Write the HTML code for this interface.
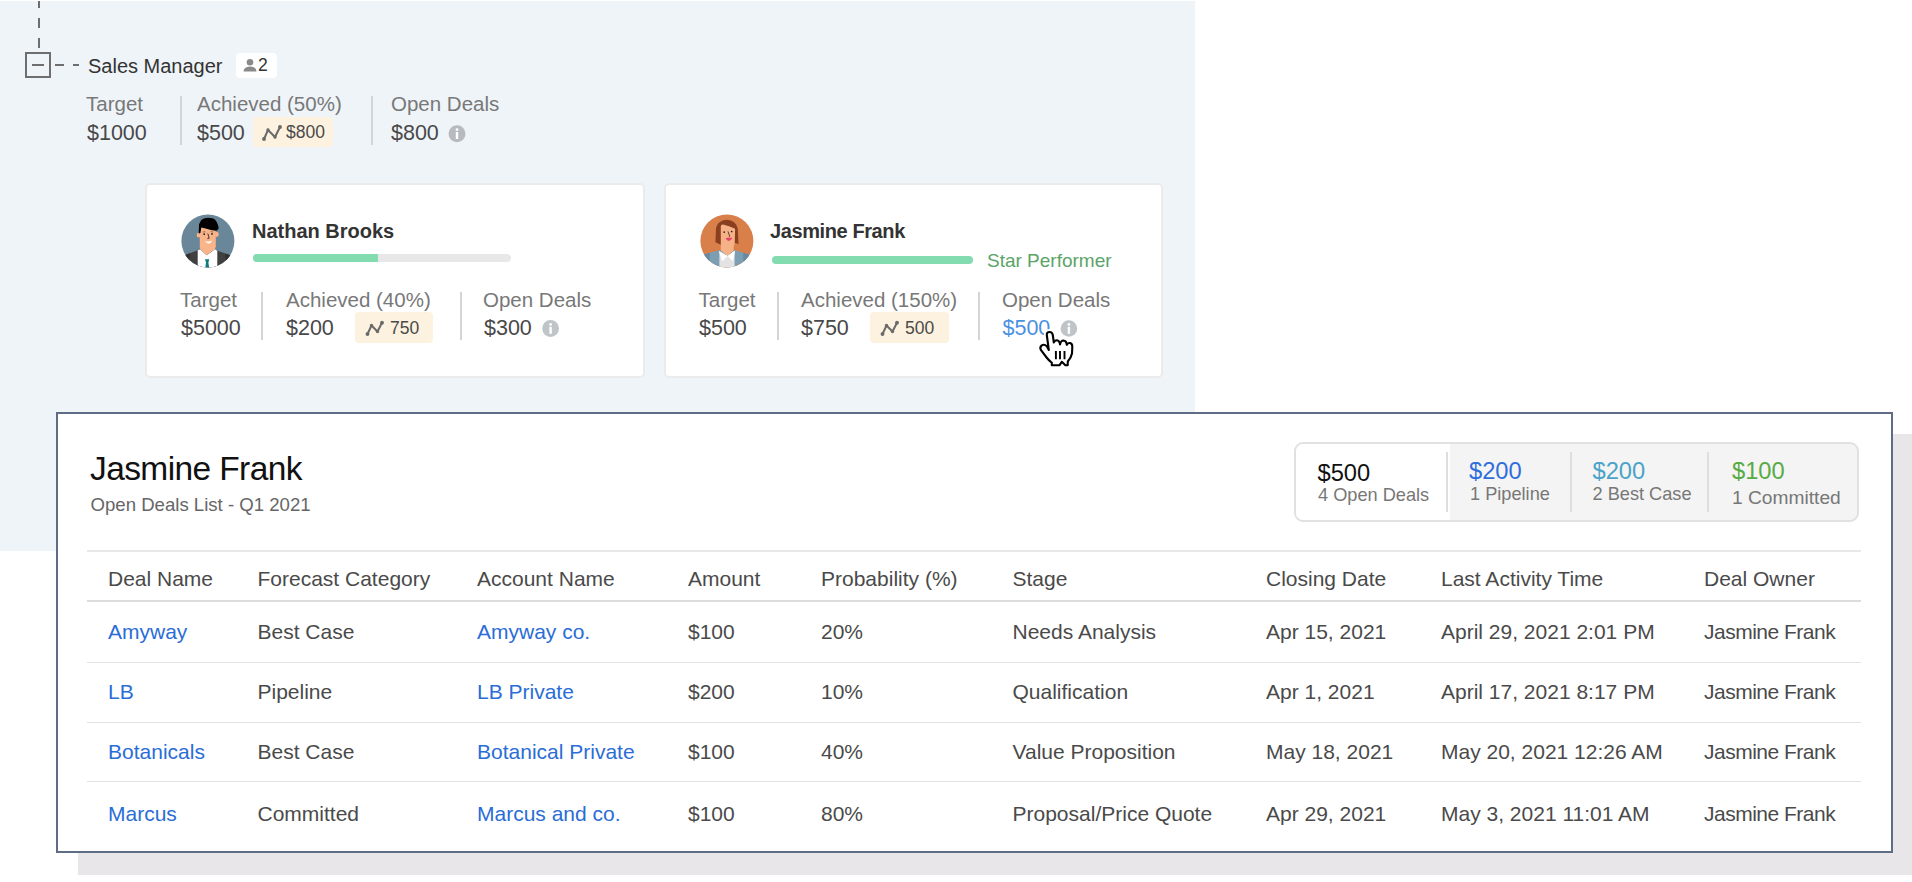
<!DOCTYPE html>
<html><head><meta charset="utf-8">
<style>
html,body{margin:0;padding:0;width:1912px;height:882px;overflow:hidden;background:#fff;font-family:"Liberation Sans",sans-serif}
.a{position:absolute}
.t{position:absolute;white-space:nowrap;line-height:1}
.bg{left:0;top:1px;width:1195px;height:550px;background:#eff4f8}
.lbl{color:#787878;font-size:20.5px}
.val{color:#484848;font-size:21.5px}
.div{background:#d5d5d5;width:2px}
.badge{background:#fdf2df;border-radius:4px}
.bnum{color:#4a4a4a;font-size:17.5px}
.card{background:#fff;border:2px solid #ebebeb;border-radius:5px;box-sizing:border-box}
.name{color:#333;font-weight:bold;font-size:20px}
.th{color:#4a4a4a;font-size:21px}
.td{color:#4a4a4a;font-size:21px}
.lk{color:#2a6dd6;font-size:21px}
.hl{background:#e2e2e2;height:1px;left:87px;width:1774px}
</style></head><body>
<div class="a bg"></div>
<!-- tree lines -->
<div class="a" style="left:38px;top:1px;width:2px;height:47.2px;overflow:hidden"><div style="margin-top:-4.3px;height:60px;background:repeating-linear-gradient(to bottom,#6e6e6e 0 10.5px,transparent 10.5px 20.5px)"></div></div>
<div class="a" style="left:25px;top:52px;width:26px;height:26px;border:2px solid #6e6e6e;box-sizing:border-box"></div>
<div class="a" style="left:32px;top:64px;width:12px;height:2px;background:#6e6e6e"></div>
<div class="a" style="left:55px;top:64px;width:9px;height:2px;background:#6e6e6e"></div>
<div class="a" style="left:73px;top:64px;width:6px;height:2px;background:#6e6e6e"></div>
<div class="t" style="left:88px;top:56px;font-size:20px;color:#333">Sales Manager</div>
<div class="a" style="left:236px;top:53px;width:41px;height:25px;background:#fff;border-radius:4px"></div>
<svg class="a" style="left:243px;top:58px" width="14" height="14" viewBox="0 0 14 14"><circle cx="7" cy="4.2" r="3.3" fill="#8a8a8a"/><path d="M0.5 13.5 Q0.6 8.6 7 8.4 Q13.4 8.6 13.5 13.5 Z" fill="#8a8a8a"/></svg>
<div class="t" style="left:258px;top:57.3px;font-size:17.5px;color:#333">2</div>

<!-- manager stats -->
<div class="t lbl" style="left:86px;top:94px">Target</div>
<div class="t val" style="left:87px;top:123px">$1000</div>
<div class="a div" style="left:180px;top:96px;height:49px"></div>
<div class="t lbl" style="left:197px;top:94px">Achieved (50%)</div>
<div class="t val" style="left:197px;top:123px">$500</div>
<div class="a badge" style="left:253px;top:117px;width:80px;height:30px"></div>
<svg class="a" style="left:261px;top:124px" width="22" height="18" viewBox="0 0 22 18"><polyline points="3,15 7,6 14,13 19,3" fill="none" stroke="#6a6a6a" stroke-width="2"/><circle cx="3" cy="15" r="1.95" fill="#6a6a6a"/><circle cx="7" cy="6" r="1.7" fill="#6a6a6a"/><circle cx="14" cy="13" r="1.7" fill="#6a6a6a"/><circle cx="19" cy="3" r="1.95" fill="#6a6a6a"/></svg>
<div class="t bnum" style="left:286px;top:123.5px">$800</div>
<div class="a div" style="left:371px;top:96px;height:49px"></div>
<div class="t lbl" style="left:391px;top:94px">Open Deals</div>
<div class="t val" style="left:391px;top:123px">$800</div>
<svg class="a" style="left:448px;top:125px" width="18" height="18" viewBox="0 0 18 18"><circle cx="9" cy="8.8" r="8.5" fill="#b7bbbf"/><circle cx="9" cy="4.6" r="1.4" fill="#fff"/><rect x="7.8" y="7" width="2.4" height="7" fill="#fff"/></svg>

<!-- Nathan card -->
<div class="a card" style="left:145px;top:183px;width:499.5px;height:195px"></div>
<svg class="a" style="left:178px;top:211px" width="60" height="60" viewBox="0 0 60 60">
<defs><clipPath id="c1"><circle cx="29.9" cy="29.9" r="26.5"/></clipPath></defs>
<circle cx="29.9" cy="29.9" r="26.5" fill="#6a8799"/>
<g clip-path="url(#c1)">
<path d="M2 60 L6 44.5 L19.7 39.3 L39.5 39.8 L53 44.5 L58 60Z" fill="#404040"/>
<path d="M2 60 L6 44.5 L12 42.3 L10 60Z M58 60 L53 44.5 L47 42.5 L49 60Z" fill="#303030"/>
<path d="M19.7 39.3 L22.4 38.6 L28.6 44.2 L37 38.2 L39.3 40 L39.3 60 L19.7 60Z" fill="#fff"/>
<path d="M21.8 16 L37.8 16 L37.8 35.5 Q37 38 36.7 38.2 L28.6 44.2 L22.4 38.6 Q21.8 37 21.8 35.5Z" fill="#f9b48a"/>
<ellipse cx="20.6" cy="24" rx="1.9" ry="2.6" fill="#f9b48a"/><ellipse cx="38.8" cy="23.3" rx="1.9" ry="2.6" fill="#f9b48a"/>
<path d="M20.7 22.6 L21 13.6 Q22.5 8.5 26 7.4 Q30 6.3 35.4 7.5 Q39 9 40.8 17 Q39.5 19.8 38 19.8 Q33 19.5 27.5 17.6 L23.3 16.4 L22.4 22Z" fill="#000"/>
<path d="M26.9 30 Q30.6 31.5 34.2 29.6 Q33 32.6 30.6 32.4 Q28 32.3 26.9 30Z" fill="#fff"/>
<circle cx="26.2" cy="23.2" r="0.85" fill="#1a1a1a"/><circle cx="34" cy="22.9" r="0.85" fill="#1a1a1a"/>
<path d="M24.8 21 L27.4 20.8 M32.6 20.7 L35.2 21" stroke="#5a3a2a" stroke-width="0.6"/>
<path d="M29.8 22.5 L31.2 27.2 L29.4 27.6" fill="none" stroke="#1a1a1a" stroke-width="0.8"/>
<path d="M27 48.3 L31.3 48.3 L30.4 51.5 L31.2 57 L27.3 57 L28 51.5Z" fill="#0e7a7b"/>
</g></svg>
<div class="t name" style="left:252px;top:221px">Nathan Brooks</div>
<div class="a" style="left:253px;top:253.5px;width:258px;height:8px;border-radius:4px;background:#e8e8e8;overflow:hidden"><div style="width:125px;height:8px;background:#82dcb0"></div></div>
<div class="t lbl" style="left:180px;top:290px">Target</div>
<div class="t val" style="left:181px;top:318px">$5000</div>
<div class="a div" style="left:260.5px;top:292px;height:48px"></div>
<div class="t lbl" style="left:286px;top:290px">Achieved (40%)</div>
<div class="t val" style="left:286px;top:318px">$200</div>
<div class="a badge" style="left:355px;top:312px;width:78px;height:31px"></div>
<svg class="a" style="left:364px;top:320px" width="22" height="18" viewBox="0 0 22 18"><polyline points="3.5,14 7.5,5.5 13.5,11.5 18,2.7" fill="none" stroke="#6a6a6a" stroke-width="2"/><circle cx="3.5" cy="14" r="1.95" fill="#6a6a6a"/><circle cx="7.5" cy="5.5" r="1.7" fill="#6a6a6a"/><circle cx="13.5" cy="11.5" r="1.7" fill="#6a6a6a"/><circle cx="18" cy="2.7" r="1.95" fill="#6a6a6a"/></svg>
<div class="t bnum" style="left:390px;top:320px">750</div>
<div class="a div" style="left:460px;top:292px;height:48px"></div>
<div class="t lbl" style="left:483px;top:290px">Open Deals</div>
<div class="t val" style="left:484px;top:318px">$300</div>
<svg class="a" style="left:542px;top:320px" width="18" height="18" viewBox="0 0 18 18"><circle cx="8.6" cy="8.5" r="8.4" fill="#bfc4c8"/><circle cx="8.6" cy="4.4" r="1.4" fill="#fff"/><rect x="7.4" y="6.8" width="2.4" height="7" fill="#fff"/></svg>

<!-- Jasmine card -->
<div class="a card" style="left:663.5px;top:183px;width:499.5px;height:195px"></div>
<svg class="a" style="left:697px;top:211px" width="60" height="60" viewBox="0 0 60 60">
<defs><clipPath id="c2"><circle cx="29.9" cy="29.9" r="26.5"/></clipPath></defs>
<circle cx="29.9" cy="29.9" r="26.5" fill="#d9804a"/>
<g clip-path="url(#c2)">
<path d="M2 60 L6.8 43.5 L21.8 39.3 L38.1 39.3 L52.4 43.5 L58 60Z" fill="#7c9eb3"/>
<path d="M2 60 L6.8 43.5 L13 41.8 L12 60Z M58 60 L52.4 43.5 L46 41.8 L47 60Z" fill="#6889a0"/>
<path d="M22.4 40 L30.6 44.9 L37.6 39.8 L37.6 60 L22.4 60Z" fill="#e3e3e3"/>
<path d="M18.4 31.3 L19 17 Q20.5 12 23.1 10.9 Q26 8.8 29.9 8.8 Q34.5 9 37.4 11.6 Q40.5 14.5 40.8 17.7 L41.5 33.3 L38.8 32 L24.5 34Z" fill="#8b3f1f"/>
<path d="M23.8 15 Q25 13.3 26 13.6 Q32 14.8 38.1 17.7 L37.8 31 Q37.4 34 36.6 35.5 L36.6 39.4 L30.6 44.9 L23.8 39.4 L23.8 34Z" fill="#f7b186"/>
<path d="M21.8 40 L30.6 44.9 L25.2 50.3 Z M38.1 39.5 L30.6 44.9 L36 50.3Z" fill="#fff"/>
<path d="M28.6 27.3 Q32 26 35.4 27.1 Q33.5 30.2 31.6 30 Q29.5 29.6 28.6 27.3Z" fill="#e8436b"/>
<circle cx="27.2" cy="21.1" r="0.85" fill="#1a1a1a"/><circle cx="34.7" cy="20.5" r="0.85" fill="#1a1a1a"/>
<path d="M31 20.4 L32.7 25.3 L32 25.9" fill="none" stroke="#1a1a1a" stroke-width="0.7"/>
</g></svg>
<div class="t name" style="left:770px;top:221px;letter-spacing:-0.4px">Jasmine Frank</div>
<div class="a" style="left:772px;top:255.5px;width:201px;height:8.5px;border-radius:4.25px;background:#82dcb0"></div>
<div class="t" style="left:987px;top:250.5px;font-size:19px;color:#5ba468">Star Performer</div>
<div class="t lbl" style="left:698.5px;top:290px">Target</div>
<div class="t val" style="left:699px;top:318px">$500</div>
<div class="a div" style="left:777px;top:292px;height:48px"></div>
<div class="t lbl" style="left:801px;top:290px">Achieved (150%)</div>
<div class="t val" style="left:801px;top:318px">$750</div>
<div class="a badge" style="left:870px;top:312px;width:79px;height:31px"></div>
<svg class="a" style="left:879px;top:320px" width="22" height="18" viewBox="0 0 22 18"><polyline points="3.5,14 7.5,5.5 13.5,11.5 18,2.7" fill="none" stroke="#6a6a6a" stroke-width="2"/><circle cx="3.5" cy="14" r="1.95" fill="#6a6a6a"/><circle cx="7.5" cy="5.5" r="1.7" fill="#6a6a6a"/><circle cx="13.5" cy="11.5" r="1.7" fill="#6a6a6a"/><circle cx="18" cy="2.7" r="1.95" fill="#6a6a6a"/></svg>
<div class="t bnum" style="left:905px;top:320px">500</div>
<div class="a div" style="left:978px;top:292px;height:48px"></div>
<div class="t lbl" style="left:1002px;top:290px">Open Deals</div>
<div class="t val" style="left:1002.5px;top:318px;color:#4a90e2">$500</div>
<svg class="a" style="left:1060px;top:320px" width="18" height="18" viewBox="0 0 18 18"><circle cx="8.9" cy="8.5" r="8.3" fill="#bfc4c8"/><circle cx="8.9" cy="4.4" r="1.4" fill="#fff"/><rect x="7.7" y="6.8" width="2.4" height="7" fill="#fff"/></svg>
<svg class="a" style="left:1035px;top:325px" width="45" height="45" viewBox="0 0 45 45">
<path d="M13.8 25 L11.8 10 Q11.6 7 14.5 7 Q17.3 7 17.8 10 L18.8 17.5 Q19.5 15.2 22 15.2 Q24.5 15.3 25 19.5 Q25.8 15.5 28.5 15.5 Q31.3 15.6 31.8 19.8 Q32.6 17.8 35 18 Q37.4 18.5 37.3 22 L37 28.5 Q36.2 32.5 32.8 36.5 L32.7 40.3 L30.4 40.3 L26.8 36.8 L24.4 40.3 L16.8 40.3 L16.8 37.8 Q13.5 35 11.6 32.5 L6 25.2 Q4.4 22.5 6.5 20.6 Q9.2 18.6 12 21.5Z" fill="#fff" stroke="#fff" stroke-width="6" stroke-linejoin="round"/><path d="M13.8 25 L11.8 10 Q11.6 7 14.5 7 Q17.3 7 17.8 10 L18.8 17.5 Q19.5 15.2 22 15.2 Q24.5 15.3 25 19.5 Q25.8 15.5 28.5 15.5 Q31.3 15.6 31.8 19.8 Q32.6 17.8 35 18 Q37.4 18.5 37.3 22 L37 28.5 Q36.2 32.5 32.8 36.5 L32.7 40.3 L30.4 40.3 L26.8 36.8 L24.4 40.3 L16.8 40.3 L16.8 37.8 Q13.5 35 11.6 32.5 L6 25.2 Q4.4 22.5 6.5 20.6 Q9.2 18.6 12 21.5Z" fill="#fff" stroke="#000" stroke-width="2.1" stroke-linejoin="round"/>
<path d="M20.9 26 V34.3 M25 26 V34.3 M29.5 26 V34.3" stroke="#000" stroke-width="1.9"/>
</svg>

<!-- panel -->
<div class="a" style="left:78px;top:434px;width:1840px;height:441px;background:#e8e6e8"></div>
<div class="a" style="left:56px;top:412px;width:1837px;height:441px;background:#fff;border:2px solid #5f6c85;box-sizing:border-box"></div>
<div class="t" style="left:90px;top:451.5px;font-size:33.5px;letter-spacing:-0.6px;color:#111">Jasmine Frank</div>
<div class="t" style="left:90.5px;top:496px;font-size:18.6px;color:#666">Open Deals List - Q1 2021</div>

<!-- pill -->
<div class="a" style="left:1293.5px;top:442px;width:565px;height:80px;border:2px solid #e1e1e1;border-radius:9px;background:#f4f4f4;box-sizing:border-box;overflow:hidden"><div style="width:154px;height:80px;background:#fff"></div></div>
<div class="a" style="left:1446px;top:451.5px;width:2px;height:60px;background:#dedede"></div>
<div class="a" style="left:1570px;top:451.5px;width:2px;height:60px;background:#dedede"></div>
<div class="a" style="left:1707px;top:451.5px;width:2px;height:60px;background:#dedede"></div>
<div class="t" style="left:1317.5px;top:461.5px;font-size:23.7px;color:#111">$500</div>
<div class="t" style="left:1318px;top:486px;font-size:18.2px;color:#777">4 Open Deals</div>
<div class="t" style="left:1469px;top:460px;font-size:23.7px;color:#2f6edb">$200</div>
<div class="t" style="left:1470px;top:484.5px;font-size:18.2px;color:#777">1 Pipeline</div>
<div class="t" style="left:1592.5px;top:460px;font-size:23.7px;color:#4aa3c8">$200</div>
<div class="t" style="left:1592.5px;top:484.5px;font-size:18.2px;color:#777">2 Best Case</div>
<div class="t" style="left:1732px;top:460px;font-size:23.7px;color:#58ab44">$100</div>
<div class="t" style="left:1732px;top:488px;font-size:19.2px;color:#777">1 Committed</div>

<!-- table -->
<div class="a hl" style="top:550px;height:2px;background:#e8e8e8"></div>
<div class="a hl" style="top:600px;height:1.5px;background:#dcdcdc"></div>
<div class="a hl" style="top:662px"></div>
<div class="a hl" style="top:721.5px"></div>
<div class="a hl" style="top:780.5px"></div>

<div class="t th" style="left:108px;top:567.5px">Deal Name</div>
<div class="t th" style="left:257.5px;top:567.5px">Forecast Category</div>
<div class="t th" style="left:477px;top:567.5px">Account Name</div>
<div class="t th" style="left:688px;top:567.5px">Amount</div>
<div class="t th" style="left:821px;top:567.5px">Probability (%)</div>
<div class="t th" style="left:1012.5px;top:567.5px">Stage</div>
<div class="t th" style="left:1266px;top:567.5px">Closing Date</div>
<div class="t th" style="left:1441px;top:567.5px">Last Activity Time</div>
<div class="t th" style="left:1704px;top:567.5px">Deal Owner</div>

<div class="t lk" style="left:108px;top:621px">Amyway</div>
<div class="t td" style="left:257.5px;top:621px">Best Case</div>
<div class="t lk" style="left:477px;top:621px">Amyway co.</div>
<div class="t td" style="left:688px;top:621px">$100</div>
<div class="t td" style="left:821px;top:621px">20%</div>
<div class="t td" style="left:1012.5px;top:621px">Needs Analysis</div>
<div class="t td" style="left:1266px;top:621px">Apr 15, 2021</div>
<div class="t td" style="left:1441px;top:621px">April 29, 2021 2:01 PM</div>
<div class="t td" style="letter-spacing:-0.5px;left:1704px;top:621px">Jasmine Frank</div>

<div class="t lk" style="left:108px;top:681px">LB</div>
<div class="t td" style="left:257.5px;top:681px">Pipeline</div>
<div class="t lk" style="left:477px;top:681px">LB Private</div>
<div class="t td" style="left:688px;top:681px">$200</div>
<div class="t td" style="left:821px;top:681px">10%</div>
<div class="t td" style="left:1012.5px;top:681px">Qualification</div>
<div class="t td" style="left:1266px;top:681px">Apr 1, 2021</div>
<div class="t td" style="left:1441px;top:681px">April 17, 2021 8:17 PM</div>
<div class="t td" style="letter-spacing:-0.5px;left:1704px;top:681px">Jasmine Frank</div>

<div class="t lk" style="left:108px;top:741px">Botanicals</div>
<div class="t td" style="left:257.5px;top:741px">Best Case</div>
<div class="t lk" style="left:477px;top:741px">Botanical Private</div>
<div class="t td" style="left:688px;top:741px">$100</div>
<div class="t td" style="left:821px;top:741px">40%</div>
<div class="t td" style="left:1012.5px;top:741px">Value Proposition</div>
<div class="t td" style="left:1266px;top:741px">May 18, 2021</div>
<div class="t td" style="left:1441px;top:741px">May 20, 2021 12:26 AM</div>
<div class="t td" style="letter-spacing:-0.5px;left:1704px;top:741px">Jasmine Frank</div>

<div class="t lk" style="left:108px;top:803px">Marcus</div>
<div class="t td" style="left:257.5px;top:803px">Committed</div>
<div class="t lk" style="left:477px;top:803px">Marcus and co.</div>
<div class="t td" style="left:688px;top:803px">$100</div>
<div class="t td" style="left:821px;top:803px">80%</div>
<div class="t td" style="left:1012.5px;top:803px">Proposal/Price Quote</div>
<div class="t td" style="left:1266px;top:803px">Apr 29, 2021</div>
<div class="t td" style="left:1441px;top:803px">May 3, 2021 11:01 AM</div>
<div class="t td" style="letter-spacing:-0.5px;left:1704px;top:803px">Jasmine Frank</div>
</body></html>
